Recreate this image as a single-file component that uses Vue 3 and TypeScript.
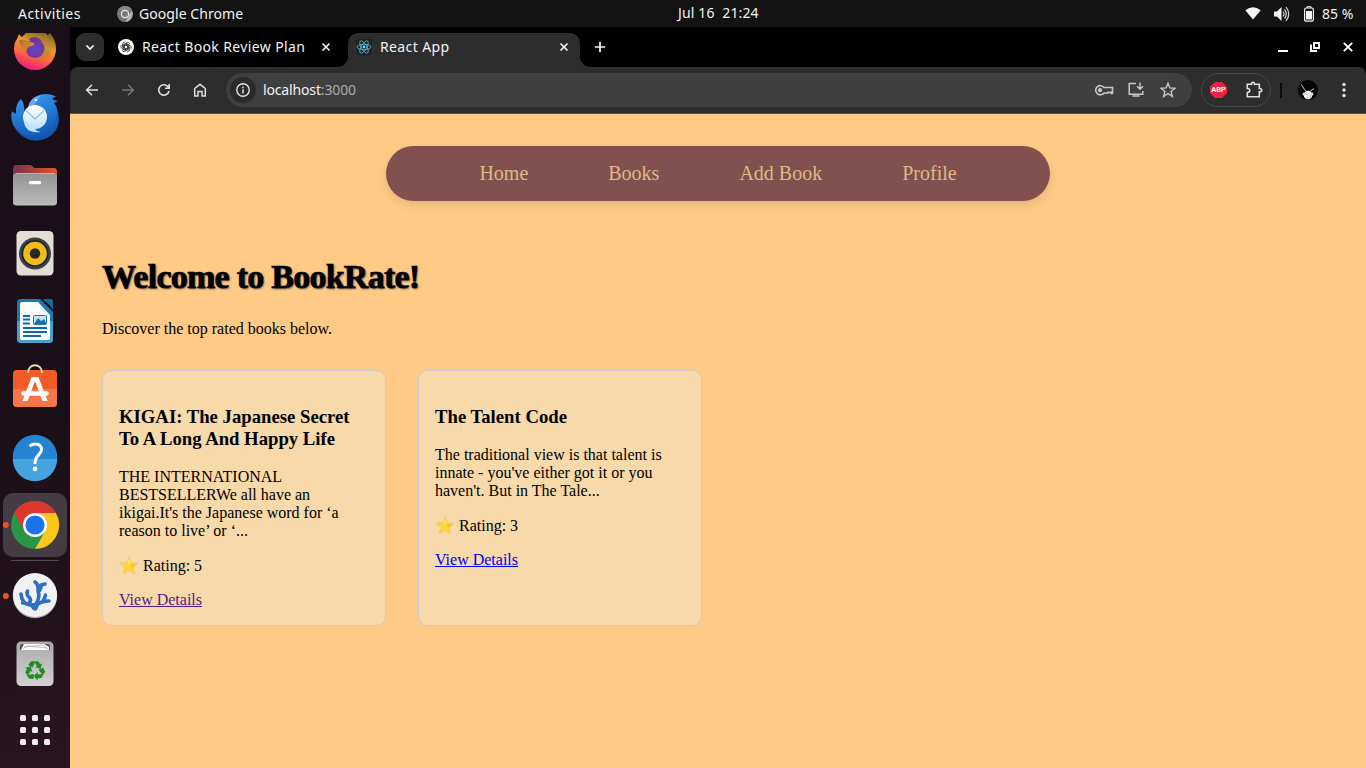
<script setup lang="ts">
interface Book {
  title: string
  description: string
  rating: number
  visited: boolean
}

const links: string[] = ['Home', 'Books', 'Add Book', 'Profile']

const books: Book[] = [
  {
    title: 'KIGAI: The Japanese Secret To A Long And Happy Life',
    description:
      "THE INTERNATIONAL BESTSELLERWe all have an ikigai.It's the Japanese word for ‘a reason to live’ or ‘...",
    rating: 5,
    visited: true,
  },
  {
    title: 'The Talent Code',
    description:
      "The traditional view is that talent is innate - you've either got it or you haven't. But in The Tale...",
    rating: 3,
    visited: false,
  },
]
const orbits: number[] = [0, 60, 120]
const petals: number[] = [0, 60, 120, 180, 240, 300]
const thirds: number[] = [0, 120, 240]
const grid: number[] = [0, 1, 2, 3, 4, 5, 6, 7, 8]
</script>

<template>
  <div class="desktop">
    <header class="topbar">
      <span class="activities">Activities</span>
      <div class="appname">
        <svg width="16" height="16" viewBox="0 0 16 16">
          <circle cx="8" cy="8" r="8" fill="#777" />
          <path d="M15 5A8 8 0 0 1 8.500 16L12 9z" fill="#b5b5b5" />
          <path d="M1 4A8 8 0 0 1 15 4H8z" fill="#858585" />
          <circle cx="8" cy="8" r="4.200" fill="#e8e8e8" />
          <circle cx="8" cy="8" r="3" fill="#777" />
        </svg>
        <span class="gc">Google Chrome</span>
      </div>
      <span class="clock">Jul 16&nbsp; 21:24</span>
      <div class="tray">
        <svg width="16" height="14" viewBox="0 0 16 14"><path d="M.3 3.2Q8-2.7 15.700 3.200L8 12.500z" fill="#f4f4f4" /></svg>
        <svg class="vol" width="16" height="16" viewBox="0 0 16 16" fill="none">
          <path d="M0 5.500H3L7.500 1V15L3 10.500H0z" fill="#f4f4f4" />
          <path d="M9 5.500Q11 8 9 10.500M10.500 3.300Q14 8 10.500 12.700M12 1Q17.500 8 12 15" stroke="#d8d8d8" stroke-width="1.200" />
        </svg>
        <svg class="bat" width="10" height="16" viewBox="0 0 10 16">
          <path d="M3 2V.7H7V2" fill="none" stroke="#f4f4f4" />
          <rect x=".6" y="2" width="8.800" height="13.200" rx="1.700" fill="none" stroke="#f4f4f4" stroke-width="1.200" />
          <rect x="2" y="5" width="6" height="8.500" fill="#f4f4f4" />
        </svg>
        <span class="pct">85 %</span>
      </div>
    </header>

    <div class="main">
      <aside class="dock">
        <div class="item first">
          <svg width="70" height="68" viewBox="0 0 70 68">
            <defs>
              <linearGradient id="fx" x1=".75" y1="0" x2=".35" y2="1">
                <stop offset="0" stop-color="#7d6020" />
                <stop offset=".34" stop-color="#e89a35" />
                <stop offset=".62" stop-color="#ff6a3c" />
                <stop offset="1" stop-color="#ee1681" />
              </linearGradient>
              <radialGradient id="fxg"><stop offset="0" stop-color="#5c49c4" /><stop offset="1" stop-color="#7b35a0" /></radialGradient>
              <linearGradient id="fxt" x1="0" y1="0" x2="1" y2=".7"><stop offset="0" stop-color="#a3742a" /><stop offset="1" stop-color="#e88c35" /></linearGradient>
            </defs>
            <path d="M17 24L19 19L22 22L26 18H45L48 20L50 18Q56 25 56 34A21 21 0 0 1 14 34Q14 28 17 24z" fill="url(#fx)" />
            <path d="M27 20Q36 16 43 22L46 18L49 24Q54 31 50 39Q45 47 34 44Z" fill="#a98528" opacity=".45" />
            <circle cx="35" cy="33.500" r="9.500" fill="url(#fxg)" />
            <path d="M29 24Q35 19 42 26Q36 25 33 28z" fill="#6f3692" />
            <path d="M19 25Q24 24 27 26L34 28Q35 30 31 31Q26 32 27 36Q20 35 19 25z" fill="url(#fxt)" />
          </svg>
        </div>
        <div class="item">
          <svg width="70" height="68" viewBox="0 0 70 68">
            <defs>
              <linearGradient id="tb" x1="0" y1="0" x2=".3" y2="1"><stop offset="0" stop-color="#36a0f4" /><stop offset="1" stop-color="#1358b5" /></linearGradient>
              <linearGradient id="env" x2="0" y2="1"><stop offset="0" stop-color="#fff" /><stop offset="1" stop-color="#bfe1fb" /></linearGradient>
            </defs>
            <g transform="translate(0 1)">
              <path d="M21 15Q15 20 16 30Q12 28 12 27Q9 37 17 47Q25 56.500 36 56.500Q49 56 56 46Q61 36 57 25Q56 21 54 19L58 17Q54 16.500 52 14.500L56 12.500Q46 8 37 12Q29 16 28 24L24 29Q25 20 21 15z" fill="url(#tb)" />
              <path d="M28 24Q30 12 43 11Q36 15 35 22Q31 21 28 24z" fill="#68a5ff" />
              <path d="M27 25Q30 20 34 20L31 26z" fill="#a78bf1" />
              <path d="M57 25Q57 43 44 47Q53 46 56 36Q53 53 37 54Q23 54 16 43Q23 58 38 57Q59 53 59 34z" fill="#0e4ca8" opacity=".35" />
              <circle cx="35" cy="33" r="12" fill="url(#env)" />
              <path d="M24 37Q25 50 41 48Q34 47 35 43z" fill="#bfe1fb" />
              <path d="M26 26.500L35 35L44 26.500" fill="none" stroke="#a1bfe4" stroke-width="1.300" />
              <ellipse cx="36" cy="16" rx="1.700" ry="1.100" fill="#e6f4ff" />
            </g>
          </svg>
        </div>
        <div class="item">
          <svg width="70" height="68" viewBox="0 0 70 68">
            <defs>
              <linearGradient id="fo"><stop offset="0" stop-color="#77314f" /><stop offset="1" stop-color="#e65527" /></linearGradient>
              <linearGradient id="fg" x2="0" y2="1"><stop offset="0" stop-color="#929292" /><stop offset="1" stop-color="#bbb" /></linearGradient>
            </defs>
            <path d="M13 18Q13 14 16 14H30Q32 14 34 17H54Q57 17 57 21V28H13z" fill="url(#fo)" />
            <rect x="13" y="22" width="44" height="32.500" rx="3.500" fill="url(#fg)" />
            <path d="M16 22.500H54" stroke="#b5b5b5" />
            <rect x="29" y="30" width="12" height="3.300" rx="1.200" fill="#fff" />
          </svg>
        </div>
        <div class="item">
          <svg width="70" height="68" viewBox="0 0 70 68">
            <rect x="16.500" y="12" width="37" height="44.500" rx="4.500" fill="#e2ded3" />
            <circle cx="35" cy="34.500" r="16" fill="#404048" />
            <circle cx="35" cy="34.500" r="13.500" fill="#22232c" />
            <circle cx="35" cy="34.500" r="11.800" fill="#eebd18" />
            <circle cx="35" cy="34.500" r="5.200" fill="#282828" />
          </svg>
        </div>
        <div class="item">
          <svg width="70" height="68" viewBox="0 0 70 68">
            <path d="M21 12H40L53 25V52Q53 56 49 56H21Q17 56 17 52V16Q17 12 21 12z" fill="#177bb2" />
            <path d="M17 34H53V52Q53 56 49 56H21Q17 56 17 52z" fill="#48a0cd" />
            <path d="M20 17Q20 15 22 15H38L50 28V51Q50 53 48 53H22Q20 53 20 51z" fill="#fff" />
            <path d="M43 12H51Q53 12 53 14V22z" fill="#14699e" />
            <path d="M23 29H30M23 32.500H30M23 36.500H30M23 41H47M23 45H47M23 49H41" stroke="#0a6ba8" stroke-width="1.900" />
            <rect x="33.500" y="28.500" width="13" height="9" rx="1" fill="#c8e4f2" stroke="#1773a9" />
            <path d="M34 37L38 31L41 34L44 32L46.500 37z" fill="#1773a9" />
          </svg>
        </div>
        <div class="item">
          <svg width="70" height="68" viewBox="0 0 70 68">
            <rect x="13" y="15" width="44" height="37" rx="4" fill="#f05b28" />
            <path d="M13 34H57V48Q57 52 53 52H17Q13 52 13 48z" fill="#f4764a" />
            <path d="M28 18C28 7.500 42 7.500 42 18" fill="none" stroke="#efd4ad" stroke-width="2" />
            <path d="M22.500 46L31.500 22H38.500L47.500 46H42.500L35 26L27.500 46z" fill="#fff" />
            <path d="M23.500 38.500H46.500" fill="none" stroke="#fff" stroke-width="4.500" stroke-linecap="round" />
          </svg>
        </div>
        <div class="item">
          <svg width="70" height="68" viewBox="0 0 70 68">
            <g transform="translate(0 -1)">
              <circle cx="35" cy="35" r="22.200" fill="#2384d2" />
              <path d="M12.800 37H57.200A22.200 22.200 0 0 1 12.800 37z" fill="#45a3dd" />
              <path d="M29.500 24Q34 21 38.500 22.500Q44.500 26.500 39 32.500Q35 36 35 42" fill="none" stroke="#fff" stroke-width="3" />
              <circle cx="35" cy="47" r="2.400" fill="#fff" />
            </g>
          </svg>
        </div>
        <div class="item">
          <svg width="70" height="68" viewBox="0 0 70 68">
            <rect x="3" y="2" width="64" height="64" rx="10" fill="#443b43" />
            <circle cx="35" cy="34" r="24" fill="#299647" />
            <path d="M14.200 22A24 24 0 0 1 55.800 22H35L24.600 40z" fill="#dc362e" />
            <path d="M55.800 22A24 24 0 0 1 35 58L45.400 40L35 22z" fill="#fcc51b" />
            <circle cx="35" cy="34" r="12" fill="#fff" />
            <circle cx="35" cy="34" r="9.600" fill="#1a73e8" />
            <circle cx="5.800" cy="34" r="3" fill="#e95420" />
          </svg>
        </div>
        <div class="rule"></div>
        <div class="item">
          <svg width="70" height="68" viewBox="0 0 70 68">
            <circle cx="35" cy="35" r="22.200" fill="#aaa" />
            <circle cx="35" cy="34" r="22" fill="#f2f2f2" />
            <g fill="none" stroke="#2e70c4" stroke-width="3.600" stroke-linecap="round" stroke-linejoin="round">
              <path d="M34.500 47Q32 43.500 28 43.500Q22 42 21 33M28 43Q32 40 29.500 36.500Q26 34 27.500 30M24 42L22.500 42" />
              <path d="M34.500 47Q36 43 42 41Q45 40 49 40M36 43Q40.500 36 38 30Q39 24 35 21M38.500 30Q41 29 41 24L45 23M43 40Q45 37 45.500 34" />
            </g>
            <path d="M29 42H40L37 49Q34.500 51 32 48z" fill="#2e70c4" />
            <circle cx="5.800" cy="35" r="3" fill="#e95420" />
          </svg>
        </div>
        <div class="item">
          <svg width="70" height="68" viewBox="0 0 70 68">
            <defs><linearGradient id="tr" x2="0" y2="1"><stop offset="0" stop-color="#aaa" /><stop offset="1" stop-color="#d1d1d1" /></linearGradient></defs>
            <rect x="16.500" y="12.500" width="37" height="44.500" rx="4.500" fill="url(#tr)" />
            <path d="M20 21V17Q20 15 22 15H48Q50 15 50 17V21z" fill="#555" />
            <path d="M21 21L24 15H44L49 18V21z" fill="#fafafa" />
            <path d="M24 18L43 16L48 20M23 20L27 17L47 19" stroke="#aaa" stroke-width=".7" fill="none" />
            <g v-for="a in thirds" :key="a" :transform="`rotate(${a} 35 41.500)`" fill="#218b20">
              <path d="M28.300 36L31 32.200H35.300L32.500 38.800z" />
              <path d="M35.500 32.200H38.300L40.300 35.300L42.300 34.300L40.500 39.800L35 38.300L37 37.200L34.500 33.500z" />
            </g>
          </svg>
        </div>
        <div class="item apps">
          <div class="dots"><i v-for="d in grid" :key="d"></i></div>
        </div>
      </aside>

      <section class="browser">
        <div class="tabstrip">
          <div class="search">
            <svg width="10" height="10" viewBox="0 0 10 10"><path d="M1.500 3.500L5 7L8.500 3.500" fill="none" stroke="#fff" stroke-width="1.700" /></svg>
          </div>
          <div class="tab idle">
            <svg width="16" height="16" viewBox="0 0 16 16">
              <circle cx="8" cy="8" r="8" fill="#fff" />
              <g fill="none" stroke="#222" stroke-width=".7">
                <path v-for="a in petals" :key="a" :transform="`rotate(${a} 8 8)`" d="M6.200 9V5.200L8.700 3.700Q10.700 2.700 12 4.700M6.200 7L9 5.300L12 7" />
              </g>
            </svg>
            <span class="label">React Book Review Plan</span>
            <svg class="x" width="10" height="10" viewBox="0 0 10 10"><path d="M1.500 1.500L8.500 8.500M8.500 1.500L1.500 8.500" stroke="#f4f4f4" stroke-width="1.700" /></svg>
          </div>
          <div class="tab active">
            <svg width="16" height="16" viewBox="0 0 16 16">
              <rect width="16" height="16" rx="2" fill="#202124" />
              <g fill="none" stroke="#58bed8" stroke-width=".8">
                <ellipse v-for="a in orbits" :key="a" cx="8" cy="8" rx="7" ry="2.700" :transform="`rotate(${a} 8 8)`" />
              </g>
              <circle cx="8" cy="8" r="1.400" fill="#61dafb" />
            </svg>
            <span class="label">React App</span>
            <svg class="x" width="10" height="10" viewBox="0 0 10 10"><path d="M1.500 1.500L8.500 8.500M8.500 1.500L1.500 8.500" stroke="#f4f4f4" stroke-width="1.700" /></svg>
          </div>
          <svg class="plus" width="12" height="12" viewBox="0 0 12 12"><path d="M6 .8V11.200M.8 6H11.200" stroke="#f4f4f4" stroke-width="1.700" /></svg>
          <div class="controls">
            <svg width="12" height="12" viewBox="0 0 12 12"><path d="M0 10H10" stroke="#fff" stroke-width="2" /></svg>
            <svg width="12" height="12" viewBox="0 0 12 12"><path d="M4 2H9V7H4zM1 3.500V10H7" fill="none" stroke="#fff" stroke-width="1.900" /></svg>
            <svg width="12" height="12" viewBox="0 0 12 12"><path d="M1.800 1.800L10.200 10.200M10.200 1.800L1.800 10.200" stroke="#fff" stroke-width="1.900" /></svg>
          </div>
        </div>

        <div class="toolbarwrap">
          <div class="toolbar">
            <div class="nav-icon"><svg width="16" height="16" viewBox="0 0 16 16"><path d="M14 8H3M8 2.700L2.700 8L8 13.300" /></svg></div>
            <div class="nav-icon dim"><svg width="16" height="16" viewBox="0 0 16 16"><path d="M2 8H13M8 2.700L13.300 8L8 13.300" /></svg></div>
            <div class="nav-icon"><svg width="16" height="16" viewBox="0 0 16 16"><path d="M13 9A5.200 5.200 0 1 1 11.700 4.400L13 5.800M13.200 2V6.200H9" /></svg></div>
            <div class="nav-icon"><svg width="16" height="16" viewBox="0 0 16 16"><path d="M2.700 14V6.500L8 2.300L13.300 6.500V14H10V9.500H6V14z" stroke-width="1.500" /></svg></div>
            <div class="omnibox">
              <div class="info"><svg width="16" height="16" viewBox="0 0 16 16"><circle cx="8" cy="8" r="6.200" fill="none" stroke="#e5e5e5" stroke-width="1.400" /><path d="M8 7.300V11.500M8 4.700V6.200" stroke="#e5e5e5" stroke-width="1.500" /></svg></div>
              <span class="url">localhost<em>:3000</em></span>
              <div class="cell"><svg width="20" height="16" viewBox="0 0 20 16" fill="none" stroke="#c7c7c7" stroke-width="1.600"><path d="M10 5.500H18.500V11.500H17V10.300H14V11H10A4.600 4.600 0 1 1 10 5.500z" /><circle cx="6" cy="8.200" r="2.100" fill="#c7c7c7" stroke="none" /></svg></div>
              <div class="cell"><svg width="18" height="18" viewBox="0 0 18 18" fill="none" stroke="#c7c7c7" stroke-width="1.500"><path d="M9 2.500H2.200V13.200H15.800V10M5.500 15H12.500M13 1.500V8M10 5.300L13 8.300L16 5.300" /></svg></div>
              <div class="cell"><svg width="18" height="18" viewBox="0 0 18 18"><path d="M9 2.300L10.900 6.900L15.900 7.300L12.100 10.500L13.300 15.400L9 12.700L4.700 15.400L5.900 10.500L2.100 7.300L7.100 6.900z" fill="none" stroke="#c7c7c7" stroke-width="1.400" /></svg></div>
            </div>
            <div class="ext">
              <div class="abp">ABP</div>
              <svg width="18" height="18" viewBox="0 0 18 18"><path d="M2.300 3.300H6.500Q6.500 1.300 8 1.300Q9.500 1.300 9.500 3.300H14.300V7.500Q16.800 7.500 16.800 9.200Q16.800 10.800 14.300 10.800V15.700H2.300V11.500Q4.800 11.200 4.800 9.500Q4.800 7.700 2.300 7.500z" fill="none" stroke="#dedede" stroke-width="1.600" /></svg>
            </div>
            <div class="sep"></div>
            <svg class="avatar" width="20" height="20" viewBox="0 0 20 20"><circle cx="10" cy="10" r="10" fill="#060606" /><path d="M3.500 4.500Q6 10 9 12M11 12L16 8.500" stroke="#c9c9c9" fill="none" /><circle cx="10" cy="15" r="4.300" fill="#f2f2f2" /><circle cx="6" cy="14" r="1.500" fill="#ddd" /><circle cx="14" cy="14" r="1.500" fill="#ddd" /><path d="M8 14.500H9.500M11.500 16H13M9 17.500H10" stroke="#888" /></svg>
            <svg class="menu" width="4" height="16" viewBox="0 0 4 16" fill="#e3e3e3"><circle cx="2" cy="2.500" r="1.700" /><circle cx="2" cy="8" r="1.700" /><circle cx="2" cy="13.500" r="1.700" /></svg>
          </div>
        </div>

        <main class="page">
          <nav class="sitenav"><a v-for="l in links" :key="l">{{ l }}</a></nav>
          <h1>Welcome to BookRate!</h1>
          <p class="intro">Discover the top rated books below.</p>
          <div class="cards">
            <article v-for="b in books" :key="b.title" class="card">
              <h3>{{ b.title }}</h3>
              <p>{{ b.description }}</p>
              <p class="rating">
                <svg width="20" height="19" viewBox="0 0 20 19"><path d="M10 .8L12.300 6.700L19 7.200L14.200 11.400L15.700 17.700L10 14.600L4.300 17.700L5.800 11.400L1 7.200L7.700 6.700z" fill="#fdd835" stroke="#d9c35e" stroke-width=".5" stroke-linejoin="round" /><path d="M10 2L10.600 7.300L9.200 7.500z" fill="#fff59d" /><path d="M12 9L17.500 8L13 11.500z" fill="#f4b400" opacity=".65" /></svg>
                <span>Rating: {{ b.rating }}</span>
              </p>
              <a class="details" :class="{ visited: b.visited }">View Details</a>
            </article>
          </div>
        </main>
      </section>
    </div>
  </div>
</template>

<style>
body { margin: 0; overflow: hidden; }
</style>

<style scoped>
* { box-sizing: border-box; }
svg { display: block; flex: none; }
.desktop { width: 1366px; height: 768px; display: flex; flex-direction: column; background: #ffca85; overflow: hidden; font-family: "Noto Sans", "Open Sans", sans-serif; color: #f2f2f2; }
.topbar { height: 27px; flex: none; background: #131313; display: grid; grid-template-columns: 117px 561px 1fr auto; align-items: center; font-size: 14px; line-height: 26px; white-space: nowrap; }
.activities { padding-left: 18px; letter-spacing: .45px; }
.appname { display: flex; align-items: center; gap: 6px; }
.gc { letter-spacing: .06px; }
.clock { letter-spacing: .15px; line-height: 24px; padding-bottom: 2px; }
.tray { display: flex; align-items: center; padding-right: 13px; }
.vol { margin-left: 13px; }
.bat { margin-left: 14px; }
.pct { margin-left: 8px; width: 31px; }
.main { display: flex; flex: 1; min-height: 0; }
.dock { width: 70px; background: linear-gradient(170deg, #1a0f18 50%, #28151f); display: flex; flex-direction: column; overflow: hidden; }
.item { height: 68px; flex: none; }
.item.first { height: 56px; overflow: hidden; }
.item.first svg { margin-top: -12px; }
.rule { height: 1px; flex: none; margin: 1px 11px 0; background: #4d4a4e; }
.apps { display: grid; place-items: center; padding-bottom: 2px; }
.dots { display: grid; grid-template-columns: repeat(3, 6px); gap: 6px; }
.dots i { height: 6px; border-radius: 1.500px; background: #f1eeee; }
.browser { flex: 1; display: flex; flex-direction: column; min-width: 0; }
.tabstrip { height: 40px; flex: none; background: #000; display: flex; align-items: center; padding-left: 6px; }
.search { width: 28px; height: 28px; border-radius: 9px; background: #2d2d2d; display: grid; place-items: center; }
.tab { display: flex; align-items: center; gap: 8px; font-size: 14px; white-space: nowrap; }
.idle { width: 230px; padding-left: 14px; margin-right: 14px; }
.label { flex: 1; letter-spacing: .38px; line-height: 20px; }
.idle .x { margin-right: 3px; }
.active { width: 232px; height: 34px; align-self: flex-end; background: #2d2d2d; border-radius: 10px 10px 0 0; padding: 0 11px 6px 8px; position: relative; }
.active::before, .active::after { content: ""; position: absolute; bottom: 0; width: 10px; height: 10px; }
.active::before { left: -10px; background: radial-gradient(circle at 0 0, transparent 9.500px, #2d2d2d 10px); }
.active::after { right: -10px; background: radial-gradient(circle at 100% 0, transparent 9.500px, #2d2d2d 10px); }
.plus { margin-left: 14px; }
.controls { display: flex; gap: 20px; margin-left: auto; padding-right: 12px; }
.toolbarwrap { height: 47px; flex: none; background: #000; }
.toolbar { height: 47px; border-radius: 8px 8px 0 0; background: #2d2d2d; border-bottom: 1px solid #555; display: flex; align-items: center; padding-left: 4px; }
.nav-icon { width: 36px; display: grid; place-items: center; }
.nav-icon svg { fill: none; stroke: #dedede; stroke-width: 1.600; }
.nav-icon.dim svg { stroke: #777; }
.omnibox { width: 966px; height: 34px; margin-left: 8px; border-radius: 17px; background: #3f3f3f; display: flex; align-items: center; padding: 0 8px 0 4px; }
.info { width: 26px; height: 26px; border-radius: 50%; background: #2b2b2b; display: grid; place-items: center; }
.url { flex: 1; font-size: 14px; margin-left: 7px; letter-spacing: -.15px; line-height: 20px; padding-bottom: 1px; }
.url em { font-style: normal; color: #aaa; }
.cell { width: 32px; display: grid; place-items: center; }
.ext { width: 70px; height: 34px; border: 1px solid #484848; border-radius: 17px; margin-left: 9px; display: flex; align-items: center; padding-left: 8px; gap: 18px; }
.abp { width: 17px; height: 16px; background: #ef1f42; clip-path: polygon(30% 0, 70% 0, 100% 30%, 100% 70%, 70% 100%, 30% 100%, 0 70%, 0 30%); font: bold 7.500px/16px Roboto, sans-serif; text-align: center; color: #fff; }
.sep { width: 2px; height: 15px; background: #0b0b0b; margin-left: 9px; }
.avatar { margin-left: 16px; }
.menu { margin-left: 24px; }
.page { flex: 1; background: #ffca85; padding: 32px; color: #000; font: 16px "Liberation Serif", serif; overflow: hidden; }
.sitenav { width: 664px; height: 55px; margin: 0 auto; border-radius: 30px; background: #82514f; box-shadow: 0 4px 8px rgba(0, 0, 0, .1); display: flex; justify-content: center; align-items: center; gap: 80px; font-size: 20px; color: #deb887; }
h1 { font-size: 34px; line-height: 44px; margin: 54px 0 21px; letter-spacing: -.750px; text-shadow: 1px 1px 2px #444; -webkit-text-stroke: .7px #000; white-space: nowrap; }
.intro { margin: 0 0 32px; line-height: 18px; }
.cards { display: flex; gap: 32px; }
.card { width: 284px; height: 256px; border: 1px solid #ccc; border-radius: 10px; padding: 16px; background: #f7d9aa; }
.card h3 { font-size: 18.720px; line-height: 22px; margin: 18.720px 0; }
.card p { line-height: 18px; margin: 0 0 16px; }
.card .rating { display: flex; align-items: center; height: 19px; gap: 4px; margin-bottom: 16px; }
.details { text-decoration: underline; color: #00e; }
.details.visited { color: #551a8b; }
</style>
